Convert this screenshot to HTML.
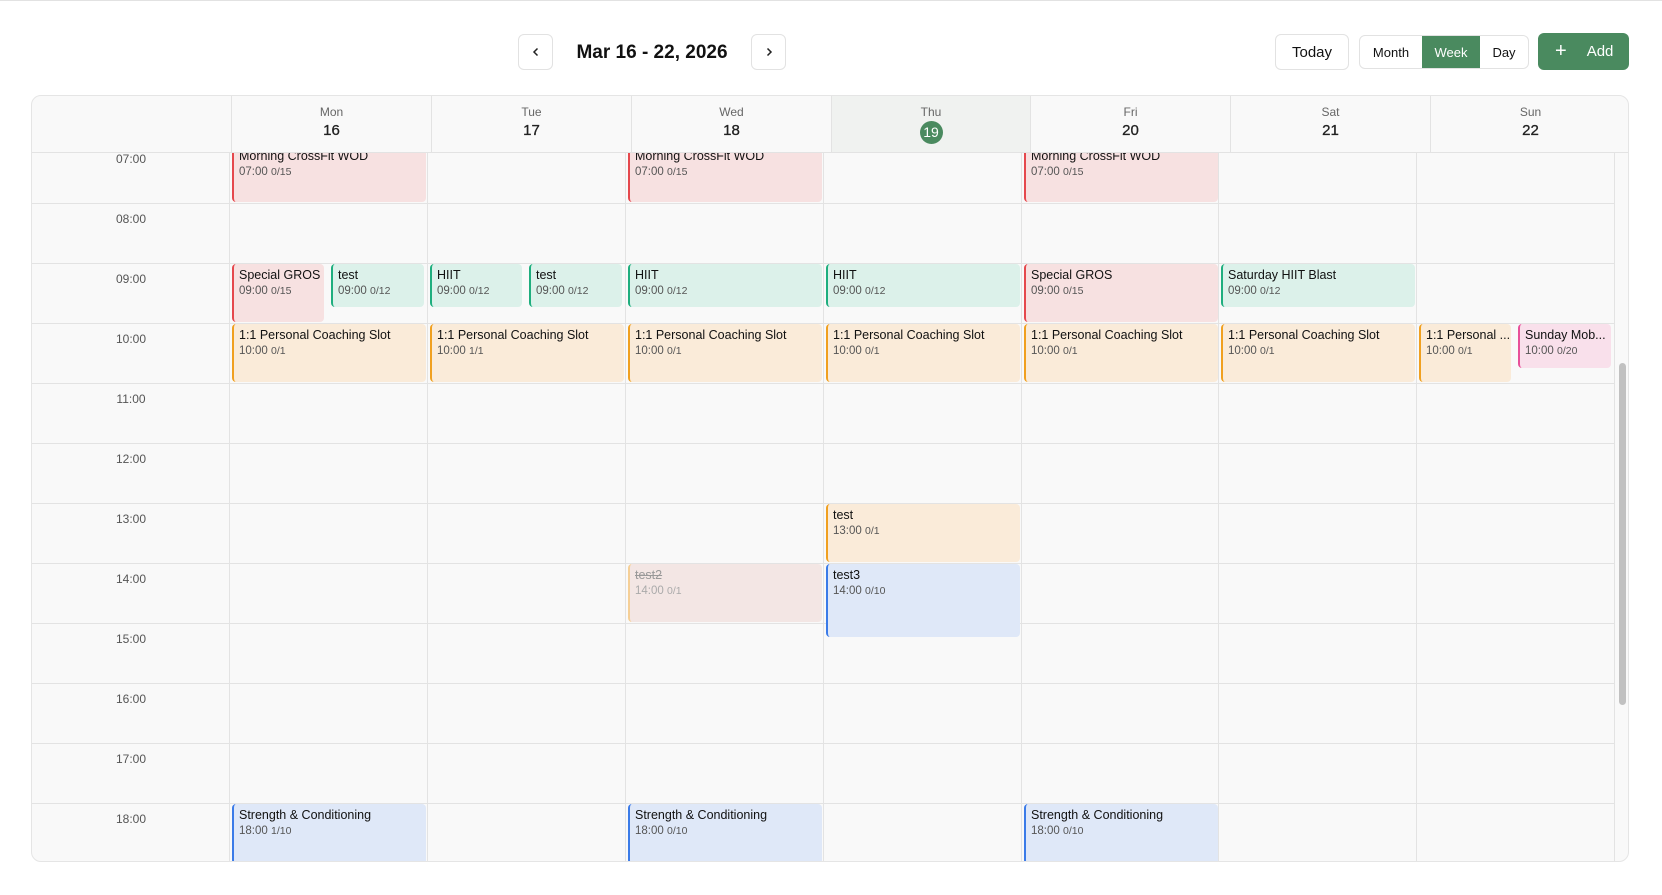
<!DOCTYPE html>
<html><head><meta charset="utf-8">
<style>
*{box-sizing:border-box;margin:0;padding:0}
body{width:1662px;height:895px;background:#fff;font-family:"Liberation Sans",sans-serif;position:relative;overflow:hidden;color:#111}
.topline{position:absolute;left:0;top:0;width:1662px;height:1px;background:#e2e2e2}
.btn{position:absolute;border:1px solid #e2e2e2;border-radius:6px;background:#fff;display:flex;align-items:center;justify-content:center}
.title{position:absolute;left:560px;top:42px;width:184px;text-align:center;font-weight:bold;font-size:19px;color:#111}
.seg{position:absolute;left:1359px;top:35px;width:170px;height:34px;border:1px solid #e2e2e2;border-radius:6px;overflow:hidden;display:flex;font-size:13px}
.seg div{display:flex;align-items:center;justify-content:center}
.add{position:absolute;left:1538px;top:33px;width:91px;height:37px;background:#4a8a5f;border-radius:6px;color:#fff;font-size:15px;display:flex;align-items:center}
.card{position:absolute;left:31px;top:95px;width:1598px;height:767px;border:1px solid #e5e5e5;border-radius:10px;background:#f9f9f9;overflow:hidden}
.hd{position:absolute;top:0;height:57px;border-left:1px solid #e3e3e3;border-bottom:1px solid #e3e3e3;text-align:center}
.hd .n{font-size:12px;color:#666;margin-top:9px}
.hd .d{font-size:15px;color:#222;margin-top:3px;-webkit-text-stroke:0.3px #222}
.bodyc{position:absolute;left:0;top:57px;width:1598px;height:710px;overflow:hidden}
.hl{position:absolute;left:0;width:1583px;height:1px;background:#e3e3e3}
.vl{position:absolute;top:0;width:1px;height:710px;background:#e3e3e3}
.tl{position:absolute;left:0;width:198px;text-align:center;font-size:12px;color:#555}
.ev{position:absolute;border-radius:4px;border-left:2px solid;padding:4px 5px;overflow:hidden;white-space:nowrap}
.ev .t{font-size:12.5px;color:#111;line-height:15px}
.ev .s{font-size:11.5px;color:#555;line-height:16px}
.ev .s small{font-size:10.5px}
.r{background:#f7e1e1;border-color:#e5484d}
.g{background:#dcf1ea;border-color:#1fae7e}
.o{background:#faebd9;border-color:#f0a020}
.b{background:#dfe8f8;border-color:#3b7be8}
.p{background:#f9e0eb;border-color:#e8509a}
</style></head><body>
<div class="topline"></div>
<div class="btn" style="left:518px;top:34px;width:35px;height:36px"><svg width="10" height="10" viewBox="0 0 10 10"><path d="M6.5 1.5L3 5l3.5 3.5" fill="none" stroke="#222" stroke-width="1.5"/></svg></div>
<div class="title">Mar 16 - 22, 2026</div>
<div class="btn" style="left:751px;top:34px;width:35px;height:36px"><svg width="10" height="10" viewBox="0 0 10 10"><path d="M3.5 1.5L7 5 3.5 8.5" fill="none" stroke="#222" stroke-width="1.5"/></svg></div>
<div class="btn" style="left:1275px;top:34px;width:74px;height:36px;font-size:15px">Today</div>
<div class="seg"><div style="width:62px">Month</div><div style="width:58px;background:#4a8a5f;color:#fff">Week</div><div style="flex:1">Day</div></div>
<div class="add"><span style="font-size:20px;margin-left:17px;font-weight:300">+</span><span style="margin-left:20px">Add</span></div>

<div class="card">
<div class="hd" style="left:0;width:199px;border-left:none"></div>
<div class="hd" style="left:199px;width:200px"><div class="n">Mon</div><div class="d">16</div></div>
<div class="hd" style="left:399px;width:200px"><div class="n">Tue</div><div class="d">17</div></div>
<div class="hd" style="left:599px;width:200px"><div class="n">Wed</div><div class="d">18</div></div>
<div class="hd" style="left:799px;width:199px;background:#f0f2f0"><div class="n">Thu</div><div class="d" style="margin:2px auto 0;width:23px;height:23px;border-radius:50%;background:#4a8a5f;color:#fff;line-height:23px;font-size:14px;-webkit-text-stroke:0">19</div></div>
<div class="hd" style="left:998px;width:200px"><div class="n">Fri</div><div class="d">20</div></div>
<div class="hd" style="left:1198px;width:200px"><div class="n">Sat</div><div class="d">21</div></div>
<div class="hd" style="left:1398px;width:200px"><div class="n">Sun</div><div class="d">22</div></div>

<div class="bodyc">
<div class="hl" style="top:50px"></div><div class="hl" style="top:110px"></div><div class="hl" style="top:170px"></div><div class="hl" style="top:230px"></div><div class="hl" style="top:290px"></div><div class="hl" style="top:350px"></div><div class="hl" style="top:410px"></div><div class="hl" style="top:470px"></div><div class="hl" style="top:530px"></div><div class="hl" style="top:590px"></div><div class="hl" style="top:650px"></div>
<div class="vl" style="left:197px"></div><div class="vl" style="left:395px"></div><div class="vl" style="left:593px"></div><div class="vl" style="left:791px"></div><div class="vl" style="left:989px"></div><div class="vl" style="left:1186px"></div><div class="vl" style="left:1384px"></div><div class="vl" style="left:1582px"></div>
<div class="tl" style="top:-1px">07:00</div><div class="tl" style="top:59px">08:00</div><div class="tl" style="top:119px">09:00</div><div class="tl" style="top:179px">10:00</div><div class="tl" style="top:239px">11:00</div><div class="tl" style="top:299px">12:00</div><div class="tl" style="top:359px">13:00</div><div class="tl" style="top:419px">14:00</div><div class="tl" style="top:479px">15:00</div><div class="tl" style="top:539px">16:00</div><div class="tl" style="top:599px">17:00</div><div class="tl" style="top:659px">18:00</div>
<div style="position:absolute;left:1587px;top:210px;width:7px;height:342px;background:#c1c1c1;border-radius:4px"></div>

<!-- Mon -->
<div class="ev r" style="left:200px;top:-8px;width:194px;height:57px"><div class="t">Morning CrossFit WOD</div><div class="s">07:00 <small>0/15</small></div></div>
<div class="ev r" style="left:200px;top:111px;width:92px;height:58px"><div class="t">Special GROS</div><div class="s">09:00 <small>0/15</small></div></div>
<div class="ev g" style="left:299px;top:111px;width:93px;height:43px"><div class="t">test</div><div class="s">09:00 <small>0/12</small></div></div>
<div class="ev o" style="left:200px;top:171px;width:194px;height:58px"><div class="t">1:1 Personal Coaching Slot</div><div class="s">10:00 <small>0/1</small></div></div>
<div class="ev b" style="left:200px;top:651px;width:194px;height:60px"><div class="t">Strength &amp; Conditioning</div><div class="s">18:00 <small>1/10</small></div></div>
<!-- Tue -->
<div class="ev g" style="left:398px;top:111px;width:92px;height:43px"><div class="t">HIIT</div><div class="s">09:00 <small>0/12</small></div></div>
<div class="ev g" style="left:497px;top:111px;width:93px;height:43px"><div class="t">test</div><div class="s">09:00 <small>0/12</small></div></div>
<div class="ev o" style="left:398px;top:171px;width:194px;height:58px"><div class="t">1:1 Personal Coaching Slot</div><div class="s">10:00 <small>1/1</small></div></div>
<!-- Wed -->
<div class="ev r" style="left:596px;top:-8px;width:194px;height:57px"><div class="t">Morning CrossFit WOD</div><div class="s">07:00 <small>0/15</small></div></div>
<div class="ev g" style="left:596px;top:111px;width:194px;height:43px"><div class="t">HIIT</div><div class="s">09:00 <small>0/12</small></div></div>
<div class="ev o" style="left:596px;top:171px;width:194px;height:58px"><div class="t">1:1 Personal Coaching Slot</div><div class="s">10:00 <small>0/1</small></div></div>
<div class="ev" style="left:596px;top:411px;width:194px;height:58px;background:#f3e6e4;border-color:#f5cf96"><div class="t" style="color:#999;text-decoration:line-through">test2</div><div class="s" style="color:#aaa">14:00 <small>0/1</small></div></div>
<div class="ev b" style="left:596px;top:651px;width:194px;height:60px"><div class="t">Strength &amp; Conditioning</div><div class="s">18:00 <small>0/10</small></div></div>
<!-- Thu -->
<div class="ev g" style="left:794px;top:111px;width:194px;height:43px"><div class="t">HIIT</div><div class="s">09:00 <small>0/12</small></div></div>
<div class="ev o" style="left:794px;top:171px;width:194px;height:58px"><div class="t">1:1 Personal Coaching Slot</div><div class="s">10:00 <small>0/1</small></div></div>
<div class="ev o" style="left:794px;top:351px;width:194px;height:58px"><div class="t">test</div><div class="s">13:00 <small>0/1</small></div></div>
<div class="ev b" style="left:794px;top:411px;width:194px;height:73px"><div class="t">test3</div><div class="s">14:00 <small>0/10</small></div></div>
<!-- Fri -->
<div class="ev r" style="left:992px;top:-8px;width:194px;height:57px"><div class="t">Morning CrossFit WOD</div><div class="s">07:00 <small>0/15</small></div></div>
<div class="ev r" style="left:992px;top:111px;width:194px;height:58px"><div class="t">Special GROS</div><div class="s">09:00 <small>0/15</small></div></div>
<div class="ev o" style="left:992px;top:171px;width:194px;height:58px"><div class="t">1:1 Personal Coaching Slot</div><div class="s">10:00 <small>0/1</small></div></div>
<div class="ev b" style="left:992px;top:651px;width:194px;height:60px"><div class="t">Strength &amp; Conditioning</div><div class="s">18:00 <small>0/10</small></div></div>
<!-- Sat -->
<div class="ev g" style="left:1189px;top:111px;width:194px;height:43px"><div class="t">Saturday HIIT Blast</div><div class="s">09:00 <small>0/12</small></div></div>
<div class="ev o" style="left:1189px;top:171px;width:194px;height:58px"><div class="t">1:1 Personal Coaching Slot</div><div class="s">10:00 <small>0/1</small></div></div>
<!-- Sun -->
<div class="ev o" style="left:1387px;top:171px;width:92px;height:58px"><div class="t">1:1 Personal ...</div><div class="s">10:00 <small>0/1</small></div></div>
<div class="ev p" style="left:1486px;top:171px;width:93px;height:44px"><div class="t">Sunday Mob...</div><div class="s">10:00 <small>0/20</small></div></div>
</div>
</div>
</body></html>
